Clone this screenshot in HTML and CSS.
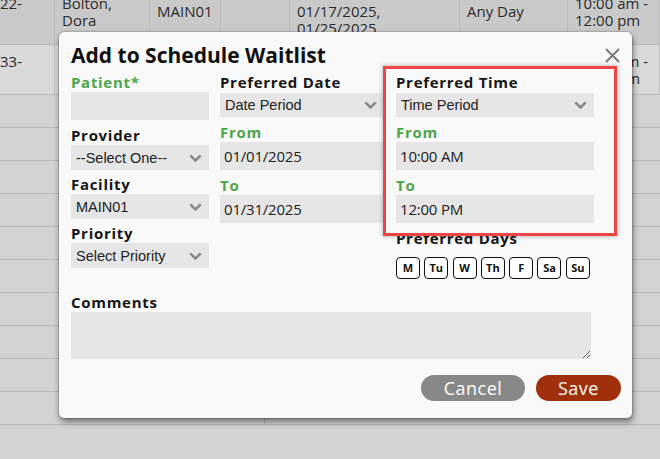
FILE: index.html
```html
<!DOCTYPE html>
<html>
<head>
<meta charset="utf-8">
<link rel="stylesheet" href="styles.css">
</head>
<body>
<div class="bg">
  <div class="row row1">
    <div class="cell c0">22-<br>&nbsp;</div>
    <div class="cell">Bolton,<br>Dora</div>
    <div class="cell">MAIN01</div>
    <div class="cell"></div>
    <div class="cell c4">01/17/2025,<br>01/25/2025</div>
    <div class="cell">Any Day</div>
    <div class="cell">10:00 am -<br>12:00 pm</div>
  </div>
  <div class="row row2">
    <div class="cell c0">33-<br>&nbsp;</div>
    <div class="cell">Smith,<br>Anne</div>
    <div class="cell">MAIN01</div>
    <div class="cell"></div>
    <div class="cell">01/20/2025</div>
    <div class="cell">Monday</div>
    <div class="cell">10:00 am -<br>12:00 pm</div>
  </div>
  <div class="blank"></div>
  <div class="blank"></div>
  <div class="blank"></div>
  <div class="blank"></div>
  <div class="blank"></div>
  <div class="blank"></div>
  <div class="blank"></div>
  <div class="blank"></div>
  <div class="blank"></div>
  <div class="blank split"><span></span><span></span></div>
</div>

<div class="modal">
  <h1 class="title">Add to Schedule Waitlist</h1>
  <svg class="close" width="15" height="15" viewBox="0 0 15 15"><path d="M1 1L14 14M14 1L1 14" stroke="#7a7a7a" stroke-width="2" fill="none"/></svg>

  <div class="cols">
    <div class="col col1">
      <label class="lbl green">Patient*</label>
      <div class="field input"></div>
      <label class="lbl">Provider</label>
      <div class="field select s25"><span>--Select One--</span><svg width="13" height="8" viewBox="0 0 13 8"><polyline points="1.3,1.3 6.5,6.5 11.7,1.3" fill="none" stroke="#8a8a8a" stroke-width="2.6"/></svg></div>
      <label class="lbl">Facility</label>
      <div class="field select s25"><span>MAIN01</span><svg width="13" height="8" viewBox="0 0 13 8"><polyline points="1.3,1.3 6.5,6.5 11.7,1.3" fill="none" stroke="#8a8a8a" stroke-width="2.6"/></svg></div>
      <label class="lbl">Priority</label>
      <div class="field select s25"><span>Select Priority</span><svg width="13" height="8" viewBox="0 0 13 8"><polyline points="1.3,1.3 6.5,6.5 11.7,1.3" fill="none" stroke="#8a8a8a" stroke-width="2.6"/></svg></div>
    </div>

    <div class="col col2">
      <label class="lbl">Preferred Date</label>
      <div class="field select first"><span>Date Period</span><svg width="13" height="8" viewBox="0 0 13 8"><polyline points="1.3,1.3 6.5,6.5 11.7,1.3" fill="none" stroke="#8a8a8a" stroke-width="2.6"/></svg></div>
      <label class="lbl green">From</label>
      <div class="field input">01/01/2025</div>
      <label class="lbl green">To</label>
      <div class="field input">01/31/2025</div>
    </div>

    <div class="col col3">
      <label class="lbl">Preferred Time</label>
      <div class="field select first"><span>Time Period</span><svg width="13" height="8" viewBox="0 0 13 8"><polyline points="1.3,1.3 6.5,6.5 11.7,1.3" fill="none" stroke="#8a8a8a" stroke-width="2.6"/></svg></div>
      <label class="lbl green">From</label>
      <div class="field input">10:00 AM</div>
      <label class="lbl green">To</label>
      <div class="field input">12:00 PM</div>
      <label class="lbl">Preferred Days</label>
      <div class="days">
        <span class="day">M</span>
        <span class="day">Tu</span>
        <span class="day">W</span>
        <span class="day">Th</span>
        <span class="day">F</span>
        <span class="day">Sa</span>
        <span class="day">Su</span>
      </div>
    </div>
  </div>

  <label class="lbl comments-lbl">Comments</label>
  <textarea class="comments"></textarea>

  <div class="actions">
    <button class="btn cancel">Cancel</button>
    <button class="btn save">Save</button>
  </div>

  <div class="highlight"></div>
</div>
</body>
</html>
```

FILE: styles.css
```css
* {
  box-sizing: border-box;
  margin: 0;
  padding: 0;
}

html, body {
  width: 660px;
  height: 459px;
  overflow: hidden;
}

body {
  position: relative;
  background: #d2d2d2;
  font-family: "Open Sans", sans-serif;
  color: #222;
}

/* background table */
.bg {
  display: flex;
  flex-direction: column;
  margin-top: -21px;
}

.row {
  display: grid;
  grid-template-columns: 55px 95px 71px 69px 170px 108px 92px;
  border-bottom: 1px solid #b8b8b8;
}

.row1 {
  height: 66px;
  background: #c9c9c9;
}

.row2 {
  height: 50px;
  background: #d9d9d9;
}

.cell {
  display: flex;
  align-items: center;
  padding-left: 7px;
  border-right: 1px solid #bdbdbd;
  font-size: 15px;
  line-height: 16.5px;
  color: #2b2b2b;
  white-space: nowrap;
  overflow: hidden;
}

.cell.c0 {
  padding-left: 0;
}

.cell.c4 {
  padding-top: 16px;
}

.blank {
  height: 33px;
  border-bottom: 1px solid #b8b8b8;
  background: #d2d2d2;
}

.blank.split {
  display: grid;
  grid-template-columns: 265px 1fr;
}

.blank.split span:first-child {
  border-right: 1px solid #b0b0b0;
}

/* modal */
.modal {
  position: absolute;
  left: 59px;
  top: 32px;
  width: 573px;
  background: #f9f9f9;
  border-radius: 5px;
  box-shadow: 1px 4px 6px rgba(0, 0, 0, 0.45), 0 0 2px rgba(0, 0, 0, 0.45);
  padding: 10px 11px 17px 12px;
}

.title {
  font-size: 21px;
  font-weight: 700;
  line-height: 26px;
  letter-spacing: 0;
  color: #111;
  margin-bottom: 5px;
}

.close {
  position: absolute;
  left: 546px;
  top: 16px;
}

.cols {
  display: flex;
  align-items: flex-start;
}

.col {
  display: flex;
  flex-direction: column;
}

.col1 {
  width: 138px;
}

.col2 {
  width: 164px;
  margin-left: 11px;
}

.col3 {
  width: 198px;
  margin-left: 12px;
}

.lbl {
  display: block;
  font-size: 15px;
  font-weight: 700;
  line-height: 18px;
  letter-spacing: 0.7px;
  color: #161616;
  margin-bottom: 1px;
  white-space: nowrap;
}

.lbl.green {
  color: #4ba64b;
}

.field {
  background: #e6e6e6;
  margin-bottom: 6px;
}

.input {
  height: 28px;
  padding-left: 4px;
  font-size: 15px;
  line-height: 28px;
  letter-spacing: -0.2px;
  color: #222;
}

.select {
  height: 24px;
  display: flex;
  align-items: center;
  justify-content: space-between;
  padding: 0 7px 0 5px;
  font-family: "Liberation Sans", Arial, sans-serif;
  font-size: 14.5px;
  color: #222;
}

.select.first {
  margin-top: 1px;
}

.select.s25 {
  height: 25px;
  margin-bottom: 5px;
}

.select svg {
  flex: none;
}

.days {
  display: flex;
  gap: 4.3px;
  margin-top: 9px;
}

.day {
  width: 24px;
  height: 22px;
  border: 1.5px solid #111;
  border-radius: 4px;
  background: #fff;
  font-size: 11px;
  font-weight: 700;
  line-height: 19px;
  text-align: center;
  color: #111;
}

.comments-lbl {
  margin-top: 14px;
}

.comments {
  display: block;
  width: 520px;
  height: 47px;
  border: none;
  background: #e6e6e6;
  resize: both;
  outline: none;
}

.actions {
  display: flex;
  justify-content: flex-end;
  gap: 11px;
  margin-top: 16px;
}

.btn {
  height: 26px;
  border: none;
  border-radius: 13px;
  color: #fff;
  font-family: "Open Sans", sans-serif;
  font-size: 18px;
  line-height: 26px;
  letter-spacing: 0.5px;
}

.cancel {
  width: 104px;
  background: #888888;
}

.save {
  width: 85px;
  background: #a0300c;
}

.highlight {
  position: absolute;
  left: 324px;
  top: 34px;
  width: 234px;
  height: 170px;
  border: 3px solid #ef4545;
  box-shadow: 0 0 4px 1px rgba(0, 0, 0, 0.22);
  pointer-events: none;
}
```
